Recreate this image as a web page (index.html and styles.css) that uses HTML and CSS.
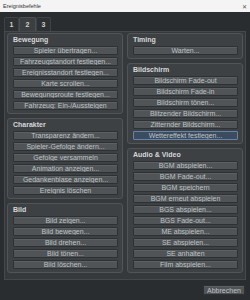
FILE: index.html
```html
<!DOCTYPE html>
<html lang="de">
<head>
    <meta charset="UTF-8">
    <title>Ereignisbefehle</title>
    <link rel="stylesheet" href="styles.css">
</head>
<body>
    <div class="window">
        <div class="titlebar">
            <span class="title">Ereignisbefehle</span>
            <span class="close">&#x2715;</span>
        </div>

        <div class="tabs">
            <div class="tab">1</div>
            <div class="tab active">2</div>
            <div class="tab">3</div>
        </div>

        <div class="panel">
            <div class="col">
                <div class="group">
                    <div class="group-title">Bewegung</div>
                    <div class="buttons">
                        <button class="btn">Spieler übertragen...</button>
                        <button class="btn">Fahrzeugstandort festlegen...</button>
                        <button class="btn">Ereignisstandort festlegen...</button>
                        <button class="btn">Karte scrollen...</button>
                        <button class="btn">Bewegungsroute festlegen...</button>
                        <button class="btn">Fahrzeug: Ein-/Aussteigen</button>
                    </div>
                </div>
                <div class="group">
                    <div class="group-title">Charakter</div>
                    <div class="buttons">
                        <button class="btn">Transparenz ändern...</button>
                        <button class="btn">Spieler-Gefolge ändern...</button>
                        <button class="btn">Gefolge versammeln</button>
                        <button class="btn">Animation anzeigen...</button>
                        <button class="btn">Gedankenblase anzeigen...</button>
                        <button class="btn">Ereignis löschen</button>
                    </div>
                </div>
                <div class="group">
                    <div class="group-title">Bild</div>
                    <div class="buttons">
                        <button class="btn">Bild zeigen...</button>
                        <button class="btn">Bild bewegen...</button>
                        <button class="btn">Bild drehen...</button>
                        <button class="btn">Bild tönen...</button>
                        <button class="btn">Bild löschen...</button>
                    </div>
                </div>
            </div>

            <div class="col">
                <div class="group">
                    <div class="group-title">Timing</div>
                    <div class="buttons">
                        <button class="btn">Warten...</button>
                    </div>
                </div>
                <div class="group">
                    <div class="group-title">Bildschirm</div>
                    <div class="buttons">
                        <button class="btn">Bildschirm Fade-out</button>
                        <button class="btn">Bildschirm Fade-in</button>
                        <button class="btn">Bildschirm tönen...</button>
                        <button class="btn">Blitzender Bildschirm...</button>
                        <button class="btn">Zitternder Bildschirm...</button>
                        <button class="btn selected">Wettereffekt festlegen...</button>
                    </div>
                </div>
                <div class="group">
                    <div class="group-title">Audio &amp; Video</div>
                    <div class="buttons">
                        <button class="btn">BGM abspielen...</button>
                        <button class="btn">BGM Fade-out...</button>
                        <button class="btn">BGM speichern</button>
                        <button class="btn">BGM erneut abspielen</button>
                        <button class="btn">BGS abspielen...</button>
                        <button class="btn">BGS Fade-out...</button>
                        <button class="btn">ME abspielen...</button>
                        <button class="btn">SE abspielen...</button>
                        <button class="btn">SE anhalten</button>
                        <button class="btn">Film abspielen...</button>
                    </div>
                </div>
            </div>
        </div>

        <div class="footer">
            <button class="btn cancel">Abbrechen</button>
        </div>
    </div>
</body>
</html>
```

FILE: styles.css
```css
body {
    margin: 0;
    font-family: "Liberation Sans", Arial, sans-serif;
    background-color: #2a2d30;
}
.window {
    width: 250px;
    height: 300px;
    overflow: hidden;
    background-color: #2a2d30;
}
.titlebar {
    height: 12px;
    background: #f4f4f4;
    display: flex;
    justify-content: space-between;
    align-items: center;
    padding: 0 3px 0 3px;
}
.title {
    font-size: 5.5px;
    color: #333;
}
.close {
    font-size: 6px;
    color: #555;
}
.tabs {
    display: flex;
    padding: 5px 4px 0;
    height: 14px;
}
.tab {
    width: 15px;
    height: 14px;
    box-sizing: border-box;
    background: #2e3134;
    border: 1px solid #3f4346;
    border-bottom: none;
    border-radius: 2px 2px 0 0;
    color: #d0d0d0;
    font-size: 7px;
    font-weight: bold;
    display: flex;
    align-items: center;
    justify-content: center;
}
.tab.active {
    width: 17px;
    background: #3b3f42;
    border-color: #4c5053;
}
.panel {
    margin: 0 4px;
    height: 249px;
    box-sizing: border-box;
    background: #36393c;
    border: 1px solid #45494c;
    padding: 0 2px 2px;
    display: grid;
    grid-template-columns: 1fr 1fr;
    column-gap: 4px;
    align-items: start;
}
.col {
    display: flex;
    flex-direction: column;
    gap: 4px;
    padding-top: 1px;
}
.group {
    background: #3e4144;
    border: 1px solid #515558;
    border-radius: 3px;
    padding: 2px 4px 3px 5px;
}
.group-title {
    height: 10px;
    line-height: 8px;
    font-size: 7px;
    font-weight: bold;
    color: #d6d8da;
}
.buttons {
    display: flex;
    flex-direction: column;
    gap: 2px;
}
.btn {
    height: 9px;
    box-sizing: border-box;
    padding: 0;
    margin: 0;
    background: #505457;
    border: 1px solid #2e3134;
    border-radius: 1px;
    box-shadow: inset 0 1px 0 #5c6063;
    color: #bfc3c6;
    font-family: "Liberation Sans", Arial, sans-serif;
    font-size: 7px;
    line-height: 7px;
    text-align: center;
    white-space: nowrap;
    overflow: hidden;
}
.btn.selected {
    background: #3b4b60;
    border-color: #6684ab;
    box-shadow: none;
}
.footer {
    display: flex;
    justify-content: flex-end;
    padding: 5px 5px 0;
}
.btn.cancel {
    width: 42px;
    height: 10px;
}
```
